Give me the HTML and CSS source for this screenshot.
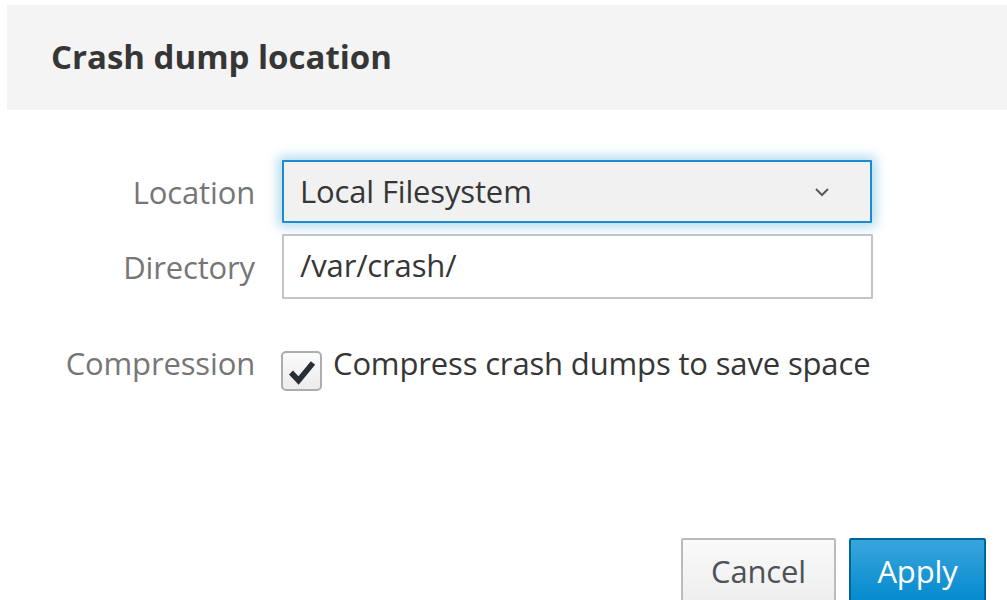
FILE: index.html
```html
<!DOCTYPE html>
<html lang="en">
<head>
<meta charset="utf-8">
<title>Crash dump location</title>
<link rel="stylesheet" href="styles.css">
</head>
<body>
<div class="dialog">
  <header class="dialog-header">
    <h4 class="dialog-title">Crash dump location</h4>
  </header>
  <div class="dialog-body">
    <div class="form-grid">
      <label class="form-label">Location</label>
      <button class="select-btn" type="button">
        <span class="select-value">Local Filesystem</span>
        <svg class="caret" width="16" height="10" viewBox="0 0 16 10" aria-hidden="true">
          <path d="M2 2 L8 8 L14 2" fill="none" stroke="#5a5a5a" stroke-width="2"/>
        </svg>
      </button>

      <label class="form-label">Directory</label>
      <input class="text-input" type="text" value="/var/crash/">

      <label class="form-label label-check">Compression</label>
      <label class="check-row">
        <span class="checkbox">
          <svg width="28" height="28" viewBox="0 0 28 28" aria-hidden="true">
            <path d="M3 14.5 L10.5 22.5 L25 5" fill="none" stroke="#292e34" stroke-width="5.5"/>
          </svg>
        </span>
        <span class="check-text">Compress crash dumps to save space</span>
      </label>
    </div>
  </div>
  <footer class="dialog-footer">
    <button class="btn btn-default" type="button">Cancel</button>
    <button class="btn btn-primary" type="button">Apply</button>
  </footer>
</div>
</body>
</html>
```

FILE: styles.css
```css
html, body {
  margin: 0;
  padding: 0;
  background: #ffffff;
  height: 600px;
  overflow: hidden;
}

body {
  font-family: "Open Sans", "Noto Sans", sans-serif;
  color: #363636;
}

.dialog {
  display: flex;
  flex-direction: column;
}

.dialog-header {
  margin: 5px 0 0 7px;
  height: 105px;
  background: #f4f4f4;
  display: flex;
  align-items: center;
  padding-left: 44px;
}

.dialog-title {
  margin: 0;
  font-size: 33px;
  font-weight: 700;
  color: #363636;
  letter-spacing: 0;
  padding-bottom: 2px;
}

.dialog-body {
  padding-top: 50px;
  height: 378px;
}

.form-grid {
  display: grid;
  grid-template-columns: 255px 590px;
  column-gap: 27px;
  grid-template-rows: 63px 65px 116px;
  row-gap: 11px;
  align-items: center;
}

.form-label {
  justify-self: end;
  font-size: 31px;
  color: #767676;
  letter-spacing: -0.15px;
}

.select-btn {
  box-sizing: border-box;
  height: 63px;
  width: 590px;
  margin: 0;
  display: flex;
  align-items: center;
  justify-content: space-between;
  padding: 0 40px 0 16px;
  border: 2px solid #1d8bd1;
  border-radius: 1px;
  background: #f1f1f1;
  box-shadow: 0 0 12px 4px rgba(0, 136, 206, 0.3);
  font-family: inherit;
  font-size: 31px;
  color: #363636;
  letter-spacing: -0.15px;
}

.select-value {
  padding-bottom: 2px;
}

.caret {
  display: block;
}

.text-input {
  box-sizing: border-box;
  height: 65px;
  width: 591px;
  margin: 0;
  padding: 0 16px 4px;
  border: 2px solid #c4c4c4;
  border-radius: 1px;
  background: #ffffff;
  font-family: inherit;
  font-size: 31px;
  color: #363636;
  letter-spacing: -0.15px;
  outline: none;
}

.label-check {
  padding-bottom: 10px;
}

.check-row {
  display: flex;
  align-items: center;
  gap: 11px;
  margin-left: -1px;
}

.checkbox {
  box-sizing: border-box;
  width: 41px;
  height: 40px;
  margin-top: 6px;
  border: 2px solid #adadad;
  border-radius: 5px;
  background: linear-gradient(#fbfbfb, #ececec);
  display: flex;
  align-items: center;
  justify-content: center;
}

.checkbox svg {
  display: block;
  margin-top: 1px;
}

.check-text {
  font-size: 31px;
  color: #363636;
  letter-spacing: -0.15px;
  padding-bottom: 10px;
}

.dialog-footer {
  display: flex;
  justify-content: flex-end;
  gap: 13px;
  padding-right: 21px;
}

.btn {
  box-sizing: border-box;
  height: 70px;
  margin: 0;
  font-family: inherit;
  font-size: 31px;
  letter-spacing: -0.15px;
  border-radius: 2px;
  padding: 0 0 4px;
  display: flex;
  align-items: center;
  justify-content: center;
}

.btn-default {
  width: 155px;
  border: 2px solid #bbbbbb;
  background: linear-gradient(#fafafa, #ededed);
  color: #4d5258;
}

.btn-primary {
  width: 137px;
  border: 2px solid #00659c;
  background: linear-gradient(#39a5dc, #0088ce);
  color: #ffffff;
}
```
